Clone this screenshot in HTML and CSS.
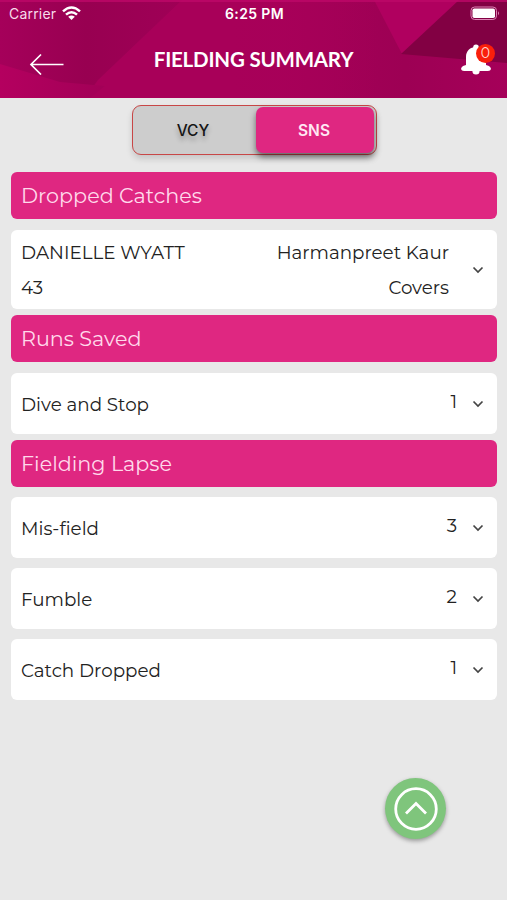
FILE: index.html
```html
<!DOCTYPE html>
<html lang="en">
<head>
<meta charset="utf-8">
<meta name="viewport" content="width=device-width, initial-scale=1">
<title>Fielding Summary</title>
<link rel="stylesheet" href="styles.css">
</head>
<body>
<svg class="symbols" aria-hidden="true">
  <symbol id="chevron" viewBox="0 0 12 8"><path d="M1.5 1.5 6 6 10.5 1.5" fill="none" stroke="#444" stroke-width="1.7"/></symbol>
</svg>
<header class="header">
  <svg class="facets" viewBox="0 0 507 98" preserveAspectRatio="none" aria-hidden="true">
    <defs>
      <linearGradient id="base" x1="0" x2="1" y1="0" y2="0"><stop offset="0" stop-color="#a5005a"/><stop offset=".17" stop-color="#980051"/><stop offset=".3" stop-color="#9d0055"/><stop offset=".55" stop-color="#a60058"/><stop offset=".8" stop-color="#9d0054"/><stop offset="1" stop-color="#a50059"/></linearGradient>
      <linearGradient id="beam" x1="0" x2="1" y1="0" y2="0"><stop offset="0" stop-color="#a80059"/><stop offset=".5" stop-color="#a80059"/><stop offset="1" stop-color="#a80059" stop-opacity="0"/></linearGradient>
      <linearGradient id="corner" x1="0" x2="1" y1="0" y2="0"><stop offset="0" stop-color="#b4005f"/><stop offset="1" stop-color="#a20057"/></linearGradient>
    </defs>
    <rect width="507" height="98" fill="url(#base)"/>
    <path d="M182 0 98 80 85 98H380V0Z" fill="url(#beam)"/>
    <path d="M0 64 60 82 105 86 90 98H0Z" fill="url(#corner)"/>
    <path d="M374 0 402 54 462 0Z" fill="#b0005f"/>
    <path d="M401 54 459 0H507V63Z" fill="#820043"/>
    <path d="M0 0H507V2H0Z" fill="#bd0868" opacity=".8"/>
  </svg>
  <div class="status">
    <div class="carrier"><span>Carrier</span>
      <svg width="19" height="15" viewBox="0 0 19 15" fill="none" stroke="#fff" stroke-width="2.5"><path d="M1 5.4Q9.5-2.3 18 5.4M4 8.7Q9.5 3.7 15 8.7"/><path d="M9.5 14 6.2 10.7Q9.5 8.3 12.8 10.7Z" fill="#fff" stroke="none"/></svg>
    </div>
    <time class="clock">6:25 PM</time>
    <svg class="battery" width="31" height="15" viewBox="0 0 31 15"><rect x="1" y="1" width="25.5" height="12.5" rx="3.6" fill="none" stroke="#dc83b4"/><rect x="2.5" y="2.5" width="22.5" height="9.5" rx="1.8" fill="#fff"/><path d="M28 5.2Q30 7.2 28 9.2Z" fill="#dc83b4"/></svg>
  </div>
  <div class="titlebar">
    <svg class="back" width="36" height="22" viewBox="0 0 36 22" fill="none" stroke="#fff" stroke-width="1.7"><path d="M34.5 11.5H2M12 1.5 2 11.5 12 21.5"/></svg>
    <h1 class="title">FIELDING SUMMARY</h1>
    <div class="bell">
      <svg width="30" height="31" viewBox="0 0 30 31" fill="#fff"><circle cx="15" cy="3.2" r="2.8"/><path d="M5 21V13C5 7 9 3 15 3S25 7 25 13V21L28 22Q30 23.5 30 25 29.5 27 27 27H3Q.5 27 0 25 0 23.5 2 22Z"/><circle cx="15" cy="27" r="3.6"/></svg>
      <span class="badge">0</span>
    </div>
  </div>
</header>
<nav class="toggle">
  <div class="tab">VCY</div>
  <div class="tab active">SNS</div>
</nav>
<main class="list">
  <h2 class="bar">Dropped Catches</h2>
  <section class="card player">
    <div class="lines"><span>DANIELLE WYATT</span><span>43</span></div>
    <div class="lines end"><span>Harmanpreet Kaur</span><span>Covers</span></div>
    <svg class="chevron"><use href="#chevron"/></svg>
  </section>
  <h2 class="bar runs">Runs Saved</h2>
  <section class="card"><span class="label">Dive and Stop</span><span class="count">1</span><svg class="chevron"><use href="#chevron"/></svg></section>
  <h2 class="bar">Fielding Lapse</h2>
  <section class="card"><span class="label">Mis-field</span><span class="count">3</span><svg class="chevron"><use href="#chevron"/></svg></section>
  <section class="card"><span class="label">Fumble</span><span class="count">2</span><svg class="chevron"><use href="#chevron"/></svg></section>
  <section class="card"><span class="label">Catch Dropped</span><span class="count">1</span><svg class="chevron"><use href="#chevron"/></svg></section>
</main>
<div class="top-button">
  <svg width="44" height="44" viewBox="0 0 44 44" fill="none" stroke="#fff" stroke-width="2.8"><circle cx="22" cy="22" r="20.3"/><path d="M12 26.5 22 16.5 32 26.5"/></svg>
</div>
</body>
</html>
```
FILE: styles.css
```css
* { box-sizing: border-box; }
body {
  margin: 0;
  height: 900px;
  overflow: hidden;
  background: #e8e8e8;
  color: #222;
  font-family: Montserrat, Inter, sans-serif;
}
svg { display: block; flex: none; }
.symbols { position: absolute; width: 0; height: 0; }
.header { position: relative; height: 98px; color: #fff; }
.facets { position: absolute; inset: 0; width: 100%; height: 100%; }
.status {
  position: relative;
  display: grid;
  grid-template-columns: 1fr auto 1fr;
  align-items: center;
  height: 28px;
  padding: 0 7px 0 9px;
  font: 400 14px/20px Inter, sans-serif;
}
.carrier { display: flex; gap: 6px; align-items: center; color: #f7dceb; letter-spacing: .2px; }
.carrier svg { margin-top: -2px; }
.clock { font-weight: 600; font-size: 14px; letter-spacing: .35px; }
.battery { justify-self: end; margin-right: -1px; margin-top: -1px; }
.titlebar {
  position: relative;
  display: grid;
  grid-template-columns: 120px 1fr 120px;
  height: 64px;
}
.back { margin: 25px 0 0 29px; }
.title { margin: 18px 0 0; text-align: center; font: 700 20.5px/27px Lato, sans-serif; white-space: nowrap; letter-spacing: -.2px; }
.bell { position: relative; justify-self: end; width: 30px; height: 31px; margin: 16px 16px 0 0; }
.badge {
  position: absolute;
  left: 15px;
  top: 0;
  width: 19px;
  height: 19px;
  border-radius: 50%;
  background: #f91f0b;
  color: #ffd8cf;
  font: 400 14px/18px Montserrat, Inter, sans-serif;
  text-align: center;
}
.toggle {
  display: flex;
  width: 245px;
  height: 50px;
  margin: 7px 0 17px 132px;
  padding: 1px 2px 1px 1px;
  border: 1.5px solid #c84747;
  border-radius: 9px;
  background: #cdcdcd;
  box-shadow: 0 4px 6px rgba(0, 0, 0, .14);
}
.tab { flex: 1; padding-right: 4px; font: 500 15.5px/47px Inter, sans-serif; text-align: center; color: #151515; text-shadow: 0 4px 5px rgba(0, 0, 0, .3); }
.tab.active { flex: 0 0 118px; padding-right: 2px; border-radius: 7px; background: #df2781; color: #ffe7f3; font-weight: 600; text-shadow: none; box-shadow: 0 4px 6px rgba(0, 0, 0, .5); }
.list { padding: 0 10px 0 11px; }
.bar {
  height: 47px;
  margin: 0;
  padding-left: 10px;
  border-radius: 6px;
  background: #df2781;
  color: #ffd9eb;
  font-size: 20.7px;
  font-weight: 400;
  line-height: 48px;
}
.card {
  display: flex;
  align-items: center;
  height: 61px;
  margin: 10px 0;
  padding: 0 13px 0 10px;
  border-radius: 6px;
  background: #fff;
  font-size: 18.3px;
  line-height: 24px;
}
.player { height: 79px; margin: 11px 0 6px; }
.runs + .card { margin: 11px 0 6px; }
.lines { display: flex; flex-direction: column; gap: 11px; margin-top: 1px; }
.end { margin-left: auto; align-items: flex-end; }
.label { padding-top: 3px; }
.runs + .card .label { padding-top: 2px; }
.count { margin-left: auto; margin-top: -4px; }
.chevron { width: 12px; height: 8px; margin-left: 15px; }
.player .chevron { margin-left: 23px; }
.top-button {
  position: absolute;
  left: 385px;
  top: 778px;
  display: grid;
  place-items: center;
  width: 61px;
  height: 61px;
  border-radius: 50%;
  background: #7fc57c;
  box-shadow: 0 2px 4px rgba(0, 0, 0, .35);
}
```
